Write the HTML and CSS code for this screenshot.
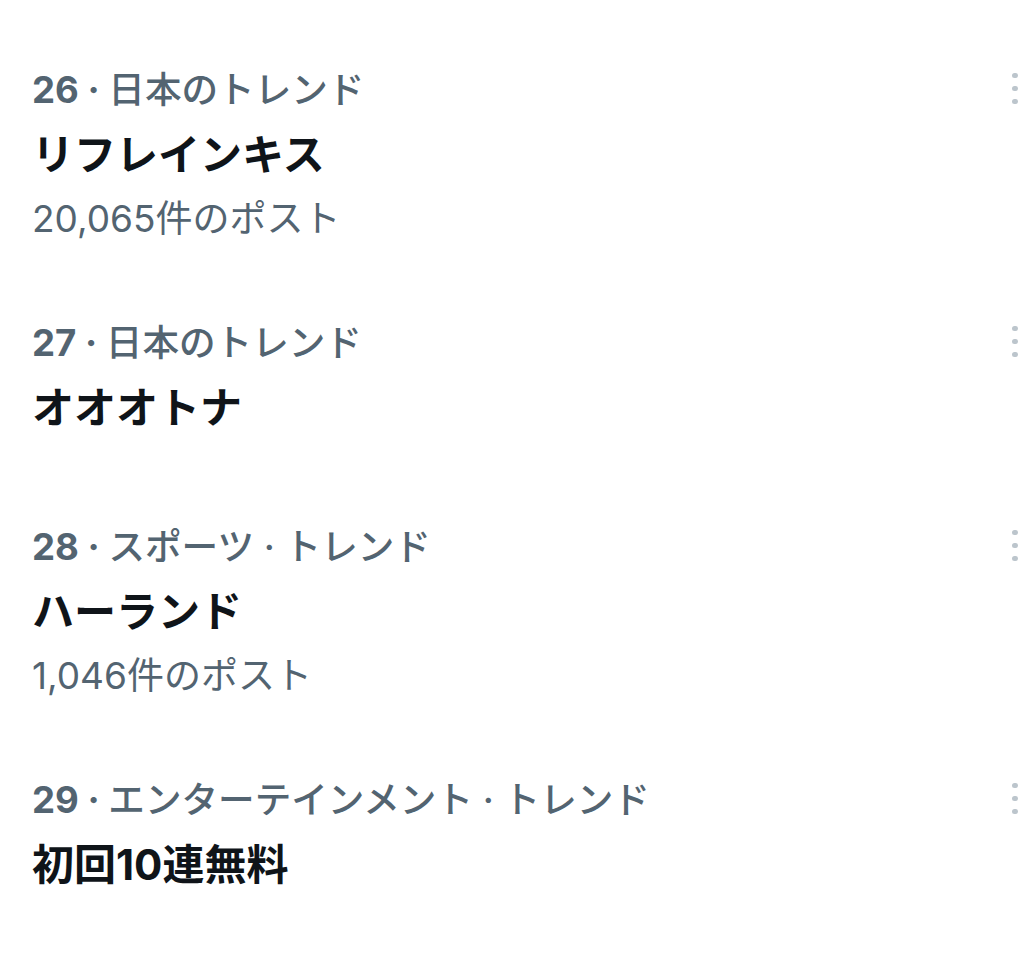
FILE: index.html
```html
<!DOCTYPE html>
<html lang="ja">

<head>
    <meta charset="UTF-8">
    <meta name="viewport" content="width=device-width, initial-scale=1.0">
    <title>トレンド</title>
    <link rel="stylesheet" href="styles.css">
</head>

<body>
    <div class="trends">
        <div class="trend">
            <div class="trend-body">
                <div class="trend-meta"><span class="rank">26 · </span>日本のトレンド</div>
                <div class="trend-title">リフレインキス</div>
                <div class="trend-count">20,065件のポスト</div>
            </div>
            <div class="more"><span></span><span></span><span></span></div>
        </div>
        <div class="trend">
            <div class="trend-body">
                <div class="trend-meta"><span class="rank">27 · </span>日本のトレンド</div>
                <div class="trend-title">オオオトナ</div>
            </div>
            <div class="more"><span></span><span></span><span></span></div>
        </div>
        <div class="trend">
            <div class="trend-body">
                <div class="trend-meta"><span class="rank">28 · </span>スポーツ · トレンド</div>
                <div class="trend-title">ハーランド</div>
                <div class="trend-count">1,046件のポスト</div>
            </div>
            <div class="more"><span></span><span></span><span></span></div>
        </div>
        <div class="trend">
            <div class="trend-body">
                <div class="trend-meta"><span class="rank">29 · </span>エンターテインメント · トレンド</div>
                <div class="trend-title">初回10連無料</div>
            </div>
            <div class="more"><span></span><span></span><span></span></div>
        </div>
    </div>
</body>

</html>
```

FILE: styles.css
```css
* {
    margin: 0;
    padding: 0;
    box-sizing: border-box;
}

html,
body {
    background: #fff;
    height: 100%;
}

body {
    font-family: Inter, "Noto Sans CJK JP", sans-serif;
    overflow: hidden;
}

.trends {
    padding-top: 28px;
}

.trend {
    display: flex;
    justify-content: space-between;
    padding: 38px 0 38px 32px;
}

.trend-meta {
    height: 49px;
    line-height: 49px;
    font-size: 36.6px;
    font-weight: 500;
    color: #536471;
}

.trend-meta .rank {
    font-weight: 700;
}

.trend-title {
    height: 79px;
    line-height: 79px;
    font-size: 42px;
    font-weight: 700;
    color: #0f1419;
}

.trend-count {
    height: 49px;
    line-height: 49px;
    font-size: 37px;
    color: #536471;
}

/* 三点メニュー */
.more {
    display: flex;
    flex-direction: column;
    gap: 7.5px;
    padding-top: 6.5px;
    width: 8px;
}

.more span {
    display: block;
    width: 5.5px;
    height: 5.5px;
    border-radius: 50%;
    background: #bcc5cc;
}
```
